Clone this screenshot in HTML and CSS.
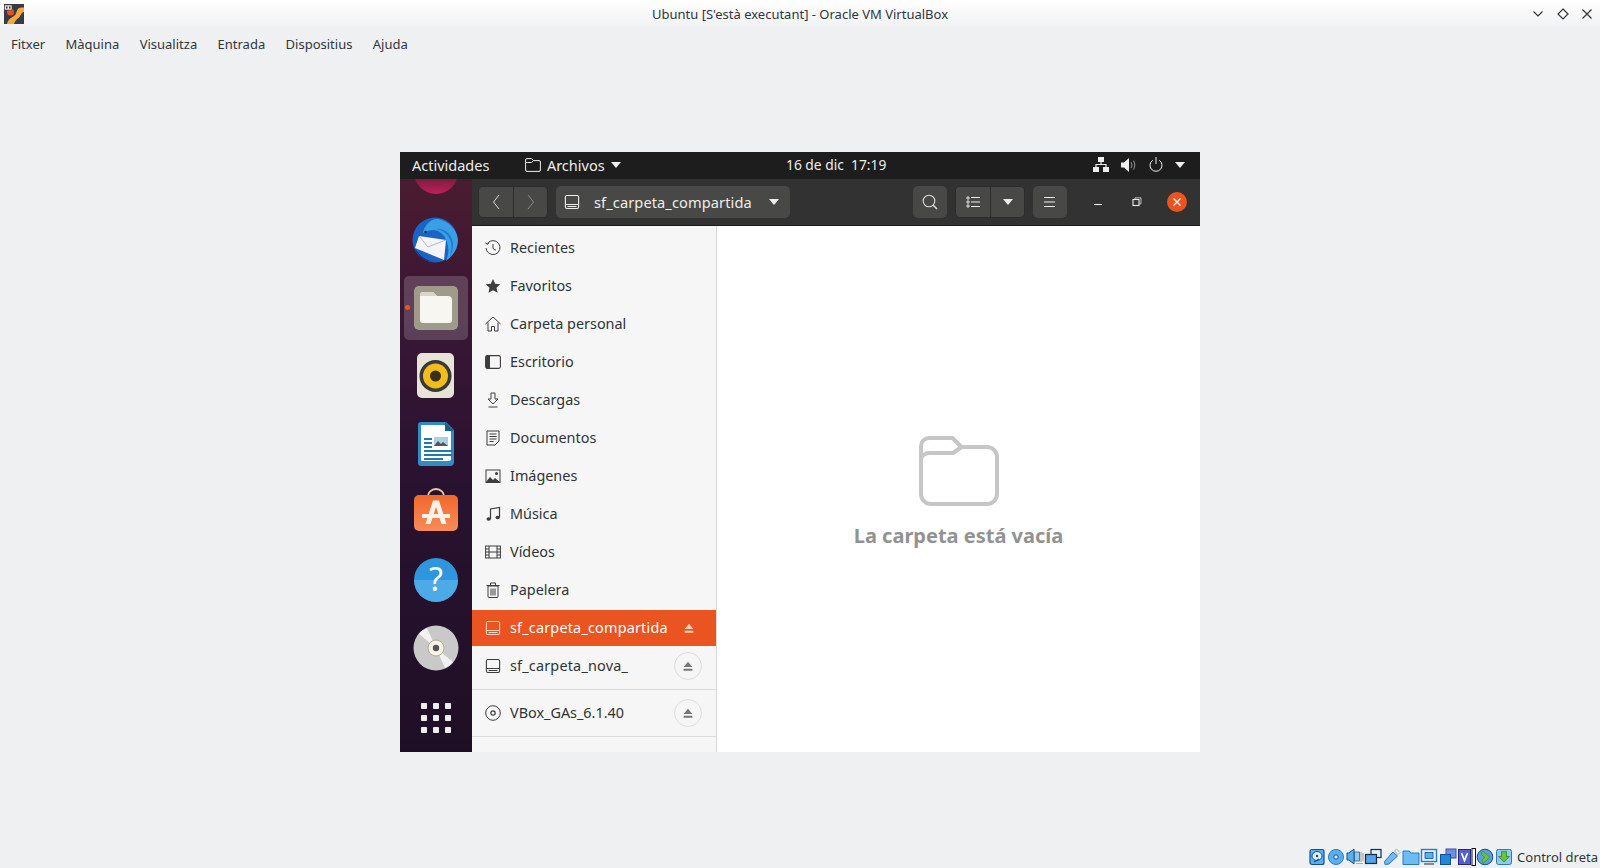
FILE: index.html
```html
<!DOCTYPE html>
<html lang="ca">
<head>
  <meta charset="UTF-8" />
  <title>Ubuntu [S'està executant] - Oracle VM VirtualBox</title>
  <link rel="stylesheet" href="styles.css">
</head>
<body>
  <svg class="defs" width="0" height="0">
    <defs>
      <linearGradient id="topIcon" x1="0" y1="0" x2="0" y2="1">
        <stop offset="0.5" stop-color="#5a1f30"/>
        <stop offset="1" stop-color="#c01f5c"/>
      </linearGradient>
      <linearGradient id="bag" x1="0" y1="0" x2="0" y2="1">
        <stop offset="0" stop-color="#f2682a"/>
        <stop offset="1" stop-color="#f58c5a"/>
      </linearGradient>
    </defs>
    <symbol id="eject" viewBox="0 0 16 16"><path d="M8 3l5 6H3zM3 11h10v2.400H3z" fill="currentColor"/></symbol>
    <symbol id="drive" viewBox="0 0 16 16"><path d="M3 1.500h10a1.600 1.600 0 0 1 1.600 1.600v9.800a1.600 1.600 0 0 1-1.600 1.600H3a1.600 1.600 0 0 1-1.600-1.600V3.100A1.600 1.600 0 0 1 3 1.500zM1.500 10.500h13M3.500 12.500h9" fill="none" stroke="currentColor" stroke-width="1.100"/></symbol>
    <symbol id="caret" viewBox="0 0 10 6"><path d="M0 0h10L5 6z" fill="currentColor"/></symbol>
  </svg>

  <div class="titlebar">
    <svg class="app-logo" width="20" height="20" viewBox="0 0 20 20">
      <rect width="20" height="20" fill="#373b47"/>
      <path d="M3 20c1-5 4-6 7-8 3-2 2-6 5-8 1.500-1 3-.5 5-.5V8c-3 .5-3 4-5.500 6-2.500 2-3.500 3-4.500 6z" fill="#f6a93b"/>
      <circle cx="6.500" cy="8" r="3.500" fill="#e8521c"/>
      <rect x="0.500" y="1" width="7.500" height="5" fill="#e6e6e6" stroke="#444" stroke-width="0.600"/>
      <path d="M2 2.500h1.500v2H2zM5 2.500h1.500v2H5z" fill="#333"/>
    </svg>
    <span class="title-text">Ubuntu [S'està executant] - Oracle VM VirtualBox</span>
    <div class="win-btns">
      <svg width="12" height="12" viewBox="0 0 12 12"><path d="M1.500 3.500L6 8l4.500-4.500" fill="none" stroke="#31363b" stroke-width="1.200"/></svg>
      <svg width="12" height="12" viewBox="0 0 12 12"><path d="M6 1l5 5-5 5-5-5z" fill="none" stroke="#31363b" stroke-width="1.200"/></svg>
      <svg width="12" height="12" viewBox="0 0 12 12"><path d="M1.500 1.500l9 9M10.500 1.500l-9 9" fill="none" stroke="#31363b" stroke-width="1.200"/></svg>
    </div>
  </div>

  <nav class="menubar">
    <span>Fitxer</span><span>Màquina</span><span>Visualitza</span><span>Entrada</span><span>Dispositius</span><span>Ajuda</span>
  </nav>

  <main class="stage">
    <div class="vm">
      <div class="panel">
        <span class="activities">Actividades</span>
        <span class="app-menu">
          <svg width="16" height="14" viewBox="0 0 16 14"><path d="M2 .6h4.500L8.500 2.600H14a1.400 1.400 0 0 1 1.400 1.400v8a1.400 1.400 0 0 1-1.400 1.400H2A1.400 1.400 0 0 1 .6 12V2A1.400 1.400 0 0 1 2 .6zM.6 4.500h6L8.500 2.600" fill="none" stroke="#eee" stroke-width="1"/></svg>
          Archivos
          <svg class="caret-sm" width="10" height="6"><use href="#caret"/></svg>
        </span>
        <span class="clock">16 de dic&nbsp; 17:19</span>
        <span class="tray">
          <svg width="16" height="15" viewBox="0 0 16 15"><path d="M5 0h6v5H5zM0 10h6v5H0zM10 10h6v5h-6z" fill="#eee"/><path d="M8 5v3M3 10V7.500h10V10" fill="none" stroke="#eee" stroke-width="1.200"/></svg>
          <svg width="15" height="14" viewBox="0 0 15 14"><path d="M0 4.500h3L8 0v14L3 9.500H0z" fill="#eee"/><path d="M10 4c1 1.800 1 4.200 0 6M12.500 2.500c1.500 2.700 1.500 6.300 0 9" fill="none" stroke="#888" stroke-width="1.100"/></svg>
          <svg width="14" height="15" viewBox="0 0 14 15"><path d="M3.800 3.200a6 6 0 1 0 6.400 0" fill="none" stroke="#eee" stroke-width="1"/><path d="M7 0v7" stroke="#eee" stroke-width="1"/></svg>
          <svg class="caret-sm" width="10" height="6"><use href="#caret"/></svg>
        </span>
      </div>

      <div class="desktop">
        <aside class="dock">
          <div class="dock-slot">
            <svg width="44" height="44" viewBox="0 0 44 44"><circle cx="22" cy="22" r="22" fill="url(#topIcon)"/></svg>
          </div>
          <div class="dock-slot">
            <svg width="48" height="50" viewBox="0 0 48 50">
              <circle cx="23" cy="25" r="22.500" fill="#1c64c4"/>
              <path d="M3 33c2 6 6 11 12 13l9 1c-9-1-16-5-21-14z" fill="#252a78"/>
              <path d="M11 17C13 9 20 3 26 4c10 2 19 10 20 21 0 8-4 15-12 21 3-7 3-13 1-19-2-7-7-11-13-12-4 0-8 1-11 3z" fill="#39a0e6"/>
              <path d="M24 14c7 1 13 6 15 13 1 6 0 10-1 14 3-5 4-11 2-17-2-6-9-11-16-10z" fill="#1b7fd4"/>
              <path d="M7 21L34 25 32 45 3 33z" fill="#f4f4f6"/>
              <path d="M7 21l9 11 18-7" fill="none" stroke="#a8a8b0" stroke-width="0.800"/>
              <circle cx="13.500" cy="17" r="1.300" fill="#1b2b5c"/>
            </svg>
          </div>
          <div class="dock-slot is-active">
            <i class="run-dot"></i>
            <svg width="44" height="44" viewBox="0 0 44 44">
              <rect width="44" height="44" rx="5" fill="#a09a8a"/>
              <path d="M6 9a3 3 0 0 1 3-3h10l4 4h11a4 4 0 0 1 4 4v20a3 3 0 0 1-3 3H9a3 3 0 0 1-3-3z" fill="#f8f6f1"/>
              <path d="M6 9a3 3 0 0 1 3-3h10l4 4H6z" fill="#d9d4c8"/>
            </svg>
          </div>
          <div class="dock-slot">
            <svg width="38" height="46" viewBox="0 0 38 46">
              <rect width="37" height="45" rx="5" fill="#e8e3d8"/>
              <circle cx="18.500" cy="23" r="16" fill="#3a3838"/>
              <circle cx="18.500" cy="23" r="12.500" fill="#f0bd1a"/>
              <circle cx="18.500" cy="23" r="5.500" fill="#3a3020"/>
            </svg>
          </div>
          <div class="dock-slot">
            <svg width="38" height="46" viewBox="0 0 38 46">
              <path d="M4 1h25l8 8v32a4 4 0 0 1-4 4H4a3 3 0 0 1-3-3V4a3 3 0 0 1 3-3z" fill="#2f8dc4"/>
              <path d="M5 4h23l6 6v28a2 2 0 0 1-2 2H5a1 1 0 0 1-1-1V5a1 1 0 0 1 1-1z" fill="#fff"/>
              <path d="M28 1l9 9h-9z" fill="#16608f"/>
              <path d="M7 17h8v2H7zM7 21h8v2H7zM7 25h8v2H7zM7 29h28v2H7zM7 33h28v2H7zM7 37h19v2H7z" fill="#2277ad"/>
              <rect x="17" y="16" width="14" height="9" fill="#a8d0e8"/>
              <path d="M17 25l4-5 3 3 2-2 5 4z" fill="#555"/>
            </svg>
          </div>
          <div class="dock-slot">
            <svg class="bag-icon" width="46" height="44" viewBox="0 0 46 44">
              <path d="M15 8c0-3 3-7 8-7s8 4 8 7" fill="none" stroke="#f2c9a0" stroke-width="1.800"/>
              <rect x="1" y="7" width="44" height="36" rx="5" fill="url(#bag)"/>
              <path d="M20 12.500h6L33.500 36h-5L23 19l-5.500 17h-5z" fill="#fdf1ea"/>
              <path d="M9 26h28v4H9z" fill="#fdf1ea"/>
            </svg>
          </div>
          <div class="dock-slot">
            <svg width="44" height="44" viewBox="0 0 44 44">
              <circle cx="22" cy="22" r="22" fill="#2f95dc"/>
              <path d="M0 22a22 22 0 0 0 44 0z" fill="#4cabe6"/>
              <text class="help-mark" x="22" y="33" text-anchor="middle">?</text>
            </svg>
          </div>
          <div class="dock-slot">
            <svg width="46" height="46" viewBox="0 0 46 46">
              <circle cx="23" cy="23" r="22.500" fill="#c9c9c9"/>
              <path d="M23 23L6 9A22 22 0 0 1 14 3zM23 23l17 14a22 22 0 0 1-8 6z" fill="#f1f1f1"/>
              <circle cx="23" cy="23" r="8" fill="#f6f2e8" stroke="#b5ad95"/>
              <circle cx="23" cy="23" r="3.200" fill="#555"/>
            </svg>
          </div>
          <div class="dock-slot">
            <div class="grid-dots"><i></i><i></i><i></i><i></i><i></i><i></i><i></i><i></i><i></i></div>
          </div>
        </aside>

        <section class="window">
          <header class="headerbar">
            <div class="btn-group">
              <span class="hbtn nav-btn"><svg width="8" height="16" viewBox="0 0 8 16"><path d="M7 1L1.500 8 7 15" fill="none" stroke="#ddd" stroke-width="1"/></svg></span>
              <span class="hbtn nav-btn"><svg width="8" height="16" viewBox="0 0 8 16"><path d="M1 1l5.500 7L1 15" fill="none" stroke="#8a8a8a" stroke-width="1"/></svg></span>
            </div>
            <div class="pathbar">
              <svg class="path-icon" width="16" height="16"><use href="#drive"/></svg>
              <span class="path-name">sf_carpeta_compartida</span>
              <svg class="caret-md" width="10" height="6"><use href="#caret"/></svg>
            </div>
            <div class="spacer"></div>
            <span class="hbtn solo"><svg width="16" height="16" viewBox="0 0 16 16"><circle cx="7" cy="7" r="5.800" fill="none" stroke="#ddd" stroke-width="1.100"/><path d="M11 11l4 4" stroke="#ddd" stroke-width="1.400"/></svg></span>
            <div class="btn-group">
              <span class="hbtn"><svg width="14" height="12" viewBox="0 0 14 12"><path d="M1 1h2v2H1zM1 5h2v2H1zM1 9h2v2H1z" fill="none" stroke="#eee" stroke-width="0.900"/><path d="M5 1.500h9M5 6h9M5 10.500h9" stroke="#eee" stroke-width="1"/></svg></span>
              <span class="hbtn"><svg class="caret-md" width="10" height="6"><use href="#caret"/></svg></span>
            </div>
            <span class="hbtn solo"><svg width="12" height="10" viewBox="0 0 12 10"><path d="M0 .5h11M0 5h11M0 9.500h11" stroke="#eee" stroke-width="1"/></svg></span>
            <div class="wm-btns">
              <svg width="10" height="10" viewBox="0 0 10 10"><path d="M1 7.500h8" stroke="#eee" stroke-width="1.100"/></svg>
              <svg class="wm-restore" width="10" height="10" viewBox="0 0 10 10"><path d="M3 2V.8h6v6H7.500" fill="none" stroke="#ccc" stroke-width="0.900"/><rect x="1" y="2.500" width="6" height="6" fill="none" stroke="#eee" stroke-width="1.100"/></svg>
              <span class="close-btn"><svg width="10" height="10" viewBox="0 0 10 10"><path d="M1.500 1.500l7 7M8.500 1.500l-7 7" stroke="#fff" stroke-width="1.300"/></svg></span>
            </div>
          </header>

          <div class="files">
            <ul class="sidebar">
              <li class="row">
                <svg width="16" height="16" viewBox="0 0 16 16"><path d="M2.300 3.500A7 7 0 1 1 1 8M.5 3l2 1.500L4 2.500M8 4v4.500l3 1.800" fill="none" stroke="currentColor" stroke-width="1"/></svg>
                Recientes
              </li>
              <li class="row">
                <svg width="16" height="16" viewBox="0 0 16 16"><path d="M8 1l2.200 4.700 5 .6-3.700 3.400 1 5L8 12.200l-4.500 2.500 1-5L.8 6.300l5-.6z" fill="currentColor"/></svg>
                Favoritos
              </li>
              <li class="row">
                <svg width="16" height="16" viewBox="0 0 16 16"><path d="M.5 8L8 1l7.500 7M3 6.500V15h3.500v-4.500h3V15H13V6.500" fill="none" stroke="currentColor" stroke-width="1"/></svg>
                Carpeta personal
              </li>
              <li class="row">
                <svg width="16" height="16" viewBox="0 0 16 16"><rect x=".6" y="1.600" width="14.800" height="12.800" rx="1.600" fill="none" stroke="currentColor" stroke-width="1.100"/><path d="M1 2h4v12H1z" fill="currentColor"/></svg>
                Escritorio
              </li>
              <li class="row">
                <svg width="16" height="16" viewBox="0 0 16 16"><path d="M6 1h4v6h3l-5 5-5-5h3zM3.500 15h9" fill="none" stroke="currentColor" stroke-width="1"/></svg>
                Descargas
              </li>
              <li class="row">
                <svg width="16" height="16" viewBox="0 0 16 16"><path d="M2 1h12v10l-4 4H2zM4.500 4h7M4.500 6.500h7M4.500 9h7M4.500 11.500h4" fill="none" stroke="currentColor" stroke-width="1"/></svg>
                Documentos
              </li>
              <li class="row">
                <svg width="16" height="16" viewBox="0 0 16 16"><rect x="1" y="2" width="14" height="12.500" fill="none" stroke="currentColor" stroke-width="1"/><path d="M1 14l4-5 3 3 2-2 5 4z" fill="currentColor"/><circle cx="11.500" cy="5.500" r="1.500" fill="currentColor"/></svg>
                Imágenes
              </li>
              <li class="row">
                <svg width="16" height="16" viewBox="0 0 16 16"><path d="M5.500 13V3l9-1.500V11" fill="none" stroke="currentColor" stroke-width="1.200"/><ellipse cx="3.700" cy="13" rx="2.200" ry="1.800" fill="currentColor"/><ellipse cx="12.700" cy="11.500" rx="2.200" ry="1.800" fill="currentColor"/></svg>
                Música
              </li>
              <li class="row">
                <svg width="16" height="16" viewBox="0 0 16 16"><rect x=".6" y="2" width="14.800" height="12" fill="none" stroke="currentColor" stroke-width="1"/><path d="M4 2v12M12 2v12M4 8h8M.6 5h3.400M.6 8h3.400M.6 11h3.400M12 5h3.400M12 8h3.400M12 11h3.400" fill="none" stroke="currentColor" stroke-width="1"/></svg>
                Vídeos
              </li>
              <li class="row">
                <svg width="16" height="16" viewBox="0 0 16 16"><path d="M3 4h10v10.500a1 1 0 0 1-1 1H4a1 1 0 0 1-1-1zM1.500 3.500h13M5.500 3V1h5v2M6 6.500v7M8 6.500v7M10 6.500v7" fill="none" stroke="currentColor" stroke-width="1"/></svg>
                Papelera
              </li>
              <li class="row mount selected">
                <svg width="16" height="16"><use href="#drive"/></svg>
                sf_carpeta_compartida
                <span class="eject-plain"><svg width="14" height="14"><use href="#eject"/></svg></span>
              </li>
              <li class="row mount">
                <svg width="16" height="16"><use href="#drive"/></svg>
                sf_carpeta_nova_
                <span class="eject"><svg width="14" height="14"><use href="#eject"/></svg></span>
              </li>
              <li class="divider"></li>
              <li class="row">
                <svg width="16" height="16" viewBox="0 0 16 16"><circle cx="8" cy="8" r="7.300" fill="none" stroke="currentColor" stroke-width="1"/><circle cx="8" cy="8" r="2.200" fill="none" stroke="currentColor" stroke-width="1.200"/></svg>
                VBox_GAs_6.1.40
                <span class="eject"><svg width="14" height="14"><use href="#eject"/></svg></span>
              </li>
              <li class="divider"></li>
            </ul>

            <div class="empty">
              <svg width="80" height="70" viewBox="0 0 80 70">
                <path d="M10 2h23.500l9 9H68a10 10 0 0 1 10 10v37a10 10 0 0 1-10 10H12A10 10 0 0 1 2 58V10a8 8 0 0 1 8-8zM2 24c0-4 4-7 8-7h24l8.500-6" fill="none" stroke="#c6c6c6" stroke-width="4" stroke-linejoin="round"/>
              </svg>
              <p class="empty-text">La carpeta está vacía</p>
            </div>
          </div>
        </section>
      </div>
    </div>
  </main>

  <footer class="statusbar">
    <div class="status-icons">
      <svg width="18" height="18" viewBox="0 0 18 18"><rect x="2" y="1.500" width="14" height="15" rx="2" fill="#58aef0" stroke="#14508f" stroke-width="1.200"/><ellipse cx="9" cy="8" rx="5" ry="4.500" fill="#e4f2fc" stroke="#14508f"/><circle cx="9" cy="8" r="1.300" fill="#14508f"/><path d="M6 14l5-3" stroke="#14508f" stroke-width="1.200"/></svg>
      <svg width="18" height="18" viewBox="0 0 18 18"><circle cx="9" cy="9" r="7.500" fill="#5ab0ec" stroke="#2a78c0"/><circle cx="9" cy="9" r="2.200" fill="#cfe8fa" stroke="#14508f"/></svg>
      <svg width="18" height="18" viewBox="0 0 18 18"><path d="M1 5h2l5-4v15l-5-4H1z" fill="#5ab0ec" stroke="#14508f"/><rect x="8.500" y="4" width="5" height="9" fill="#8cc8f2" stroke="#14508f" stroke-width="0.700"/><path d="M15 4v10M17 5v8M10 15.500h7" stroke="#aaa" stroke-width="1.200"/></svg>
      <svg width="18" height="18" viewBox="0 0 18 18"><rect x="7" y="1.500" width="10" height="8" fill="#dff0fc" stroke="#1a2a40" stroke-width="1.200"/><rect x="1.500" y="6.500" width="11" height="9" fill="#4fa4ea" stroke="#1a2a40" stroke-width="1.200"/></svg>
      <svg width="18" height="18" viewBox="0 0 18 18"><path d="M1.500 13.500L10 4l4.500 4-8.500 8-4 .5z" fill="#6fb9f0" stroke="#2a78c0"/><path d="M11.500 3l2-2 3.500 3.500-2 2z" fill="#f2f2f2" stroke="#888" stroke-width="0.700"/></svg>
      <svg width="18" height="18" viewBox="0 0 18 18"><path d="M1 3h6.500l1 2H17v11.500H1z" fill="#6bbcf2" stroke="#2a78c0"/></svg>
      <svg width="18" height="18" viewBox="0 0 18 18"><rect x="1.500" y="1.500" width="15" height="12" fill="#e8f4fd" stroke="#1f7ed0" stroke-width="1.400"/><rect x="5" y="4.500" width="8" height="6" fill="#5ab0ec" stroke="#14508f" stroke-width="0.800"/><path d="M4 16h10" stroke="#667" stroke-width="1.500"/></svg>
      <svg width="18" height="18" viewBox="0 0 18 18"><rect x="7" y="1" width="10" height="9" fill="#6d8fe0" stroke="#3350a8"/><rect x="1.500" y="6.500" width="10" height="10" fill="#1f86dc" stroke="#14508f"/></svg>
      <svg width="18" height="18" viewBox="0 0 18 18"><rect x=".5" y="1.500" width="12" height="15" fill="#5560d0" stroke="#222a80"/><path d="M3.500 5l3 7.500 3-7.500" fill="none" stroke="#fff" stroke-width="1.700"/><rect x="14" y=".5" width="3.500" height="17" fill="#fff" stroke="#111"/></svg>
      <svg width="18" height="18" viewBox="0 0 18 18"><circle cx="9" cy="9" r="7.800" fill="#5a9fe0" stroke="#14508f"/><path d="M6.500 3l7.500 6-7 6.500-1-3 2.500-3.500L5 6z" fill="#6bc23a" stroke="#2f7a18" stroke-width="0.500"/></svg>
      <svg width="18" height="18" viewBox="0 0 18 18"><rect x="1.500" y="1.500" width="15" height="15" rx="2" fill="#8ccaf2" stroke="#2a78c0"/><path d="M6.500 3.500h5v5h3L9 14 3.500 8.500h3z" fill="#6bc23a" stroke="#2f7a18" stroke-width="0.700"/></svg>
    </div>
    <span class="host-key">Control dreta</span>
  </footer>
</body>
</html>
```

FILE: styles.css
```css
* {
  box-sizing: border-box;
}
html,
body {
  height: 100%;
}
body {
  margin: 0;
  display: flex;
  flex-direction: column;
  overflow: hidden;
  background-color: #eff0f1;
  color: #31363b;
  font-family: "Noto Sans", sans-serif;
  font-size: 13px;
}
.defs {
  position: absolute;
}

/* host window */
.titlebar {
  height: 29px;
  flex: none;
  display: flex;
  align-items: center;
  justify-content: center;
  padding-bottom: 2px;
  position: relative;
  background: linear-gradient(#ffffff, #eff0f1);
}
.app-logo {
  position: absolute;
  left: 4px;
  top: 4px;
}
.win-btns {
  position: absolute;
  right: 7px;
  top: 8px;
  display: flex;
  gap: 12.500px;
}
.menubar {
  height: 30px;
  flex: none;
  display: flex;
  align-items: center;
  padding-left: 0.8px;
}
.menubar span {
  padding: 0 10.200px;
}
.stage {
  flex: 1;
  min-height: 0;
  display: flex;
  justify-content: center;
  padding-top: 93px;
}
.statusbar {
  height: 23px;
  flex: none;
  display: flex;
  align-items: center;
  justify-content: flex-end;
  padding-right: 2px;
  gap: 4px;
}
.status-icons {
  display: flex;
  gap: 0.7px;
  align-items: center;
}

/* guest screen */
.vm {
  width: 800px;
  height: 600px;
  display: flex;
  flex-direction: column;
  background: #fff;
  font-family: "Noto Sans", sans-serif;
}
.panel {
  height: 27px;
  flex: none;
  display: flex;
  align-items: center;
  position: relative;
  background: #1d1d1d;
  color: #eeeeec;
  font-size: 14.500px;
  padding: 0 15px 2px 12px;
}
.activities {
  margin-right: 35.500px;
}
.app-menu {
  display: flex;
  align-items: center;
  gap: 6px;
}
.caret-sm {
  color: #eeeeec;
  display: block;
}
.clock {
  position: absolute;
  left: 386px;
  font-size: 13.800px;
}
.tray {
  margin-left: auto;
  display: flex;
  align-items: center;
  gap: 12.500px;
}
.desktop {
  flex: 1;
  min-height: 0;
  display: flex;
}
.dock {
  width: 72px;
  flex: none;
  overflow: hidden;
  background: linear-gradient(#4a1c30 0%, #3a1635 25%, #2a1230 50%, #1f0f26 100%);
}
.dock-slot {
  height: 68px;
  display: flex;
  align-items: center;
  justify-content: center;
  position: relative;
}
.dock-slot:first-child {
  margin-top: -41px;
}
.dock-slot.is-active {
  width: 64px;
  height: 64px;
  margin: 2px 4px;
  border-radius: 5px;
  background: rgba(255,255,255,0.18);
}
.bag-icon {
  margin-bottom: 5px;
}
.run-dot {
  position: absolute;
  left: 1px;
  top: 29px;
  width: 5px;
  height: 5px;
  border-radius: 50%;
  background: #e95420;
}
.help-mark {
  font-family: "Noto Sans", sans-serif;
  font-size: 32px;
  fill: #fff;
}
.grid-dots {
  display: grid;
  grid-template-columns: repeat(3, 6px);
  gap: 6px;
  margin-top: 4px;
}
.grid-dots i {
  height: 6px;
  border-radius: 1px;
  background: #eee;
}

/* nautilus */
.window {
  flex: 1;
  min-width: 0;
  display: flex;
  flex-direction: column;
}
.headerbar {
  height: 47px;
  flex: none;
  display: flex;
  align-items: center;
  gap: 8px;
  padding: 0 13px 0 6px;
  background: #333232;
  border-bottom: 1px solid #1a1a1a;
  color: #eeeeec;
}
.btn-group {
  display: flex;
  border-radius: 5px;
  overflow: hidden;
  border: 1px solid #2c2c2c;
}
.hbtn {
  height: 32px;
  width: 34px;
  display: flex;
  align-items: center;
  justify-content: center;
  background: #484846;
}
.btn-group .hbtn {
  height: 30px;
}
.btn-group .hbtn + .hbtn {
  border-left: 1px solid #2c2c2c;
}
.hbtn.solo {
  border-radius: 5px;
}
.pathbar {
  width: 234px;
  height: 32px;
  display: flex;
  align-items: center;
  padding: 0 11px 0 8px;
  border-radius: 5px;
  background: #484846;
  font-size: 14.600px;
  letter-spacing: 0.1px;
}
.path-icon {
  margin-right: 14px;
}
.path-name {
  flex: 1;
}
.caret-md {
  display: block;
  color: #eeeeec;
}
.spacer {
  flex: 1;
}
.wm-btns {
  display: flex;
  align-items: center;
  gap: 27px;
  margin-left: 18px;
}
.wm-restore {
  margin: 0 -2px 0 2px;
}
.close-btn {
  width: 20px;
  height: 20px;
  border-radius: 50%;
  display: flex;
  align-items: center;
  justify-content: center;
  background: #e95420;
}
.files {
  flex: 1;
  min-height: 0;
  display: flex;
}
.sidebar {
  width: 245px;
  flex: none;
  margin: 0;
  padding: 4px 0 0;
  list-style: none;
  background: #f6f6f6;
  border-right: 1px solid #d8d8d8;
  color: #2e3436;
  font-size: 14.400px;
}
.row {
  height: 36px;
  margin-bottom: 2px;
  display: flex;
  align-items: center;
  gap: 9px;
  padding: 0 14px 2px 13px;
  color: #2e3436;
}
.row.mount {
  letter-spacing: 0.2px;
}
.row > svg:first-child {
  margin-top: 2px;
  color: #3d3d3d;
  flex: none;
}
.row.selected {
  background: #e95420;
  color: #fff;
}
.row.selected > svg:first-child {
  color: #f8cdbb;
}
.eject,
.eject-plain {
  margin: 2px 0 0 auto;
  width: 28px;
  height: 28px;
  display: flex;
  align-items: center;
  justify-content: center;
  color: #777;
  border-radius: 50%;
}
.eject {
  border: 1px solid #dedede;
}
.eject-plain {
  color: #f8cdbb;
}
.divider {
  height: 1px;
  margin: 5px 0;
  background: #dcdcdc;
}
.empty {
  flex: 1;
  display: flex;
  flex-direction: column;
  align-items: center;
  justify-content: center;
  padding-top: 6px;
}
.empty-text {
  margin: 16px 0 0;
  color: #929292;
  font-size: 20px;
  font-weight: 700;
}
```
